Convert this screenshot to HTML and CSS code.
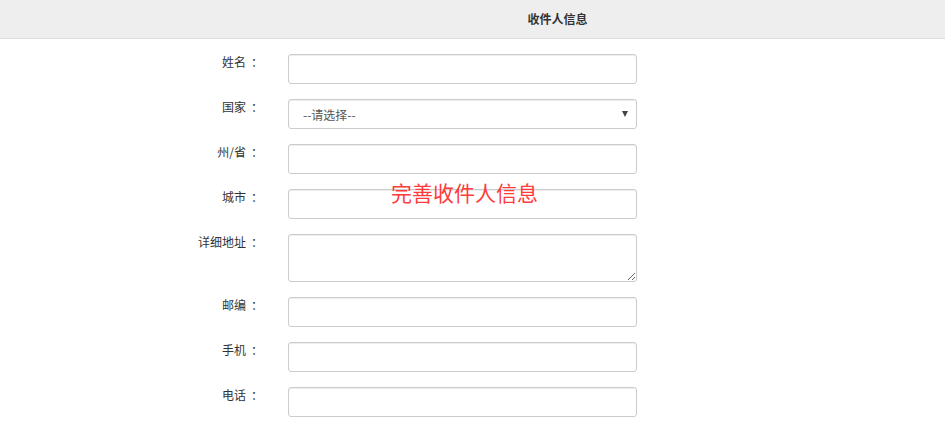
FILE: index.html
```html
<!DOCTYPE html>
<html lang="zh-CN">
<head>
    <meta charset="UTF-8">
    <meta name="viewport" content="width=device-width, initial-scale=1.0">
    <title>收件人信息</title>
    <link rel="stylesheet" href="styles.css">
</head>
<body>
    <div class="header">
        <span class="header-title">收件人信息</span>
    </div>

    <div class="page">
        <form class="address-form">
            <div class="form-row">
                <label class="form-label">姓名<span class="colon">：</span></label>
                <input type="text" class="form-input">
            </div>
            <div class="form-row">
                <label class="form-label">国家<span class="colon">：</span></label>
                <div class="select-wrap">
                    <select class="form-input form-select">
                        <option>--请选择--</option>
                    </select>
                </div>
            </div>
            <div class="form-row">
                <label class="form-label">州/省<span class="colon">：</span></label>
                <input type="text" class="form-input">
            </div>
            <div class="form-row">
                <label class="form-label">城市<span class="colon">：</span></label>
                <input type="text" class="form-input">
            </div>
            <div class="form-row">
                <label class="form-label">详细地址<span class="colon">：</span></label>
                <textarea class="form-input form-textarea"></textarea>
            </div>
            <div class="form-row">
                <label class="form-label">邮编<span class="colon">：</span></label>
                <input type="text" class="form-input">
            </div>
            <div class="form-row">
                <label class="form-label">手机<span class="colon">：</span></label>
                <input type="text" class="form-input">
            </div>
            <div class="form-row">
                <label class="form-label">电话<span class="colon">：</span></label>
                <input type="text" class="form-input">
            </div>
        </form>

        <div class="toast">完善收件人信息</div>
    </div>
</body>
</html>
```

FILE: styles.css
```css
body {
    margin: 0;
    font-family: "Noto Sans CJK SC", "Liberation Sans", sans-serif;
    font-size: 12px;
    color: #333;
    background: #fff;
}

.header {
    height: 38px;
    line-height: 38px;
    padding-left: 170px;
    text-align: center;
    background: #eeeeee;
    border-bottom: 1px solid #dddddd;
}

.header-title {
    font-weight: bold;
    font-size: 12px;
    color: #333;
}

.page {
    position: relative;
}

.address-form {
    padding-top: 15px;
}

.form-row {
    display: grid;
    grid-template-columns: 258px 349px;
    column-gap: 30px;
    margin-bottom: 15px;
}

.form-label {
    text-align: right;
    line-height: 16px;
    color: #333;
}

/* the full-width colon sits to the left of its cell here, nudge it to the middle */
.colon {
    margin-left: 5px;
    margin-right: -5px;
}

.form-input {
    display: block;
    box-sizing: border-box;
    width: 349px;
    height: 30px;
    margin: 0;
    padding: 4px 14px;
    font-family: inherit;
    font-size: 12px;
    color: #555;
    background: #fff;
    border: 1px solid #cccccc;
    border-radius: 3px;
    box-shadow: inset 0 1px 1px rgba(0, 0, 0, 0.075);
    outline: none;
}

.form-textarea {
    height: 48px;
    resize: both;
}

.select-wrap {
    position: relative;
    width: 349px;
}

.form-select {
    appearance: none;
    -webkit-appearance: none;
    padding-top: 4px;
}

.select-wrap::after {
    content: "";
    position: absolute;
    right: 9px;
    top: 12px;
    border-left: 3px solid transparent;
    border-right: 3px solid transparent;
    border-top: 6px solid #444;
    pointer-events: none;
}

.toast {
    position: absolute;
    left: 391px;
    top: 141px;
    font-size: 21px;
    line-height: 24px;
    color: #ff3b3b;
    pointer-events: none;
}
```
